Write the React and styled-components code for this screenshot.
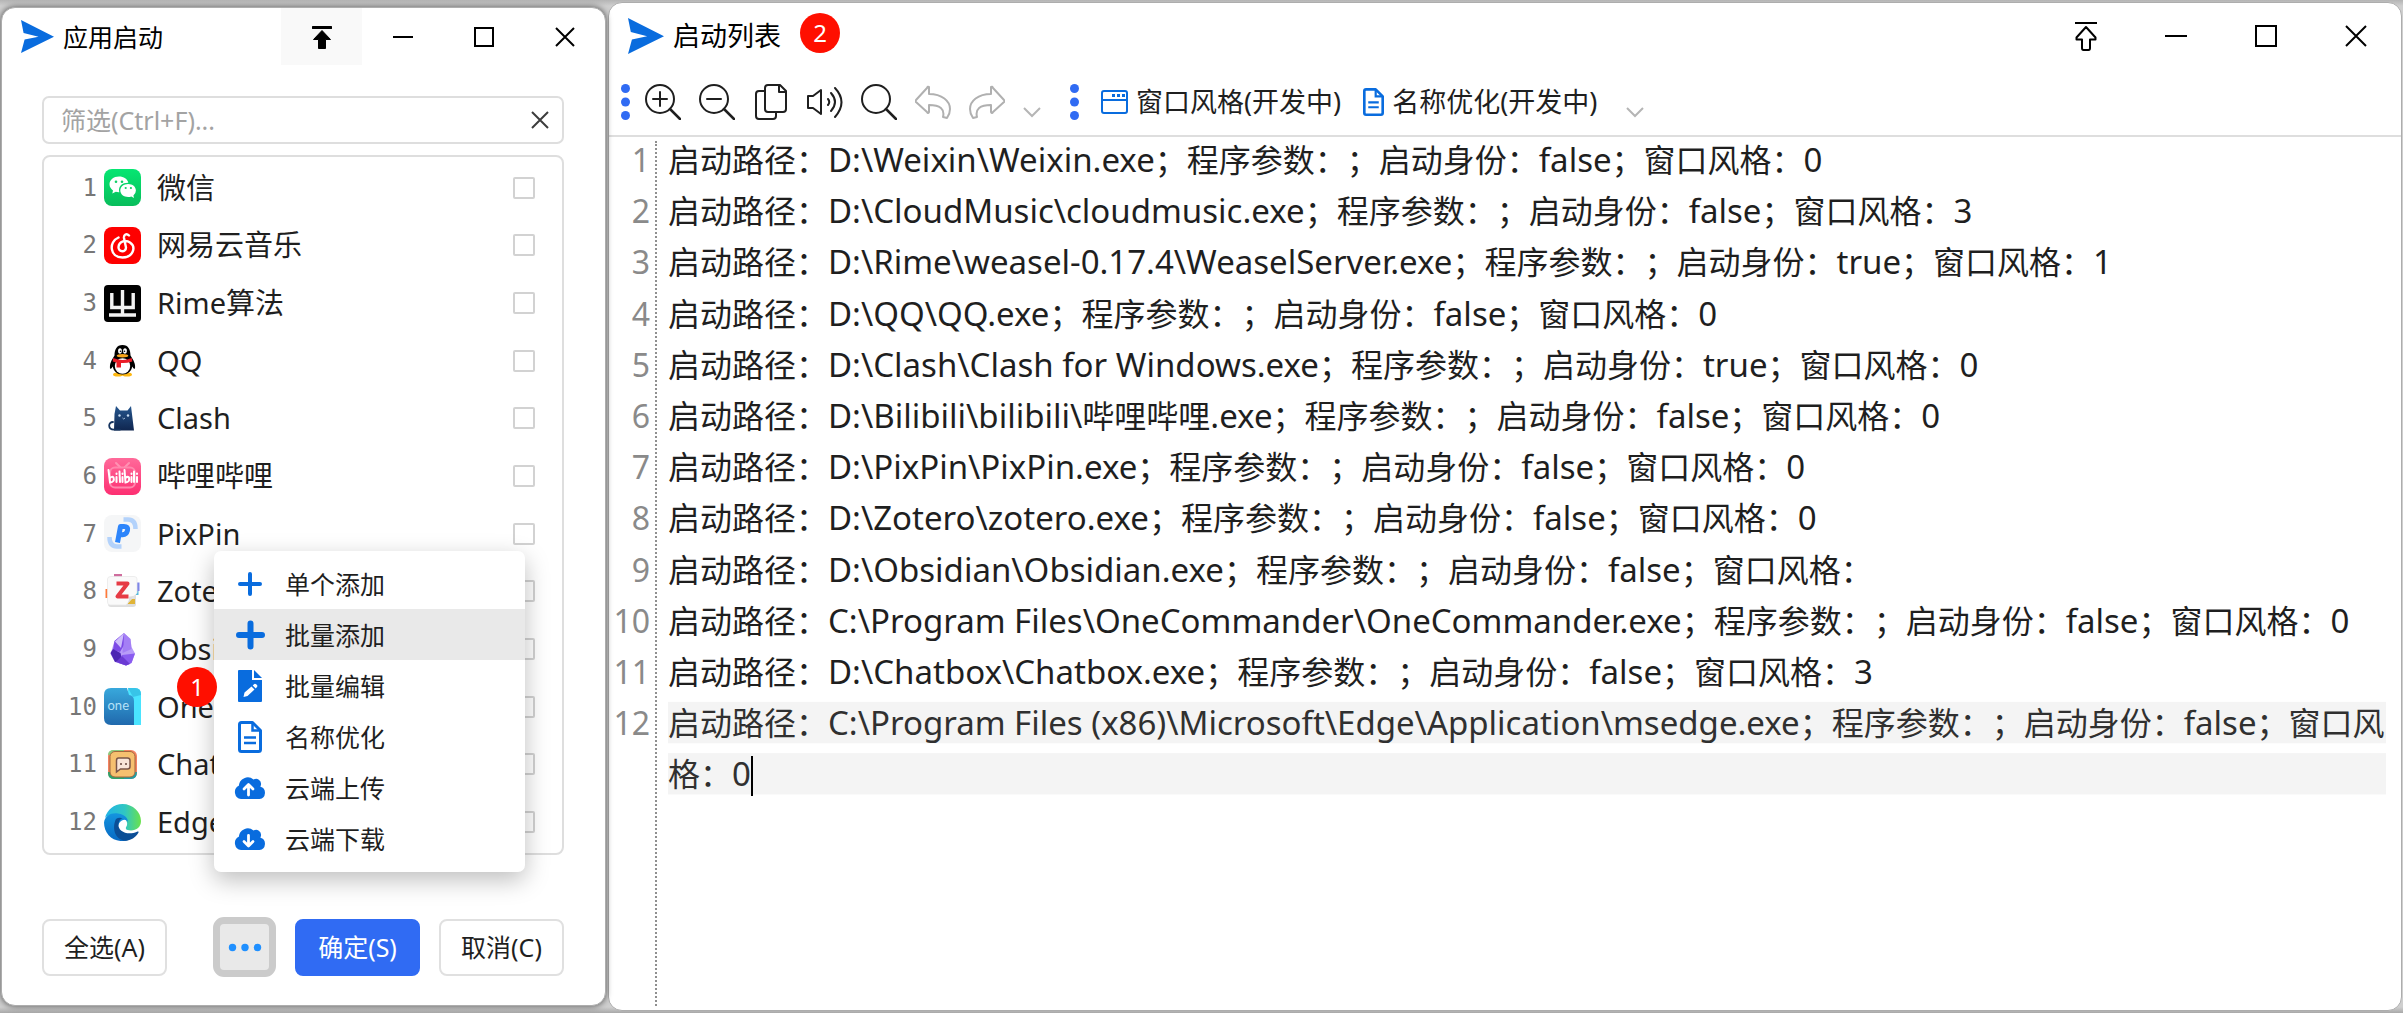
import React from "react";
import styled, { createGlobalStyle, css } from "styled-components";

const sans = `"Noto Sans", "Noto Sans CJK SC", sans-serif`;
const mono = `"DejaVu Sans Mono", monospace`;
const blue = "#096cde";

const GlobalStyle = createGlobalStyle`
  * { box-sizing: border-box; }
  body {
    margin: 0;
    font-family: ${sans};
    color: #1f1f1f;
    background: #cbcbcb;
    text-spacing-trim: space-all;
  }
  button, input { font: inherit; color: inherit; }
`;

const Desktop = styled.main`
  display: grid;
  grid-template-columns: 605px minmax(0, 1fr);
  gap: 2px;
  min-height: 100vh;
  padding: 2px 1px 2px 1px;
  background: linear-gradient(#b4b4b4, #cfcfcf 6px, #cfcfcf calc(100% - 6px), #a8a8a8);
`;

const Window = styled.section`
  display: flex;
  flex-direction: column;
  background: #fff;
  border: 1px solid #adadad;
  border-radius: 14px;
`;

const LauncherWindow = styled(Window)`
  position: relative;
  z-index: 1;
  margin: 5px 0;
  box-shadow: 0 0 6px rgba(0, 0, 0, 0.6);
`;

const EditorWindow = styled(Window)`
  min-width: 0;
`;

const TitleBar = styled.header`
  display: flex;
  align-items: center;
  height: ${(p) => (p.$large ? 65 : 57)}px;
  padding-left: 19px;
`;

const Title = styled.h1`
  flex: ${(p) => (p.$fill ? 1 : "none")};
  margin: 0 0 0 9px;
  font-size: ${(p) => (p.$large ? 27 : 25)}px;
  line-height: 36px;
  font-weight: 400;
  color: #000;
`;

const TitleSpacer = styled.div`
  flex: 1;
`;

const PlainButton = styled.button`
  display: flex;
  align-items: center;
  justify-content: center;
  padding: 0;
  border: 0;
  background: none;
`;

const WindowButton = styled(PlainButton)`
  width: ${(p) => (p.$large ? 90 : 81)}px;
  height: 57px;
  color: #000;
  background: ${(p) => (p.$active ? "#f9f9f9" : "transparent")};
`;

const badgeStyle = css`
  display: flex;
  align-items: center;
  justify-content: center;
  width: 40px;
  height: 40px;
  border-radius: 50%;
  background: #ff0f00;
  color: #fff;
  font-size: 24px;
  line-height: 24px;
`;

const TitleBadge = styled.span`
  ${badgeStyle}
  margin: 0 0 5px 19px;
`;

const MenuBadge = styled.span`
  ${badgeStyle}
  position: absolute;
  left: -37px;
  top: 116px;
`;

const LauncherBody = styled.div`
  display: flex;
  flex: 1;
  flex-direction: column;
  padding: 31px 41px 28px 40px;
`;

const SearchBox = styled.div`
  display: flex;
  align-items: center;
  height: 48px;
  padding: 0 13px 0 17px;
  border: 2px solid #dedede;
  border-radius: 7px;
`;

const SearchInput = styled.input`
  flex: 1;
  min-width: 0;
  padding: 0;
  border: 0;
  outline: 0;
  background: none;
  font-size: 25px;
  line-height: 36px;
  &::placeholder { color: #a3a3a3; opacity: 1; }
`;

const AppList = styled.ul`
  display: grid;
  flex: 1;
  grid-auto-rows: 1fr;
  margin: 11px 0 62px;
  padding: 2px 0 2px;
  border: 2px solid #dedede;
  border-radius: 8px;
  list-style: none;
`;

const AppRow = styled.label`
  display: flex;
  align-items: center;
  height: 100%;
  padding-right: 27px;
`;

const AppNumber = styled.span`
  width: 53px;
  margin-right: 7px;
  text-align: right;
  font: 24px/36px ${mono};
  color: #777;
`;

const AppName = styled.span`
  flex: 1;
  margin-left: 16px;
  font-size: 29px;
  line-height: 40px;
`;

const CheckBox = styled.input`
  appearance: none;
  width: 22px;
  height: 22px;
  margin: 0;
  border: 2px solid #d2d2d2;
  border-radius: 2px;
  background: #fff;
  &:checked { background: #306bf3; }
`;

const Footer = styled.footer`
  display: flex;
  align-items: center;
  height: 60px;
`;

const ActionButton = styled.button`
  width: 125px;
  height: 57px;
  padding: 0;
  border: 2px solid ${(p) => (p.$primary ? "#306bf3" : "#e0e0e0")};
  border-radius: 8px;
  background: ${(p) => (p.$primary ? "#306bf3" : "#fff")};
  color: ${(p) => (p.$primary ? "#fff" : "#1f1f1f")};
  font-size: 25px;
  line-height: 36px;
`;

const MoreAnchor = styled.div`
  position: relative;
  margin-left: auto;
`;

const MoreButton = styled(PlainButton)`
  width: 63px;
  height: 60px;
  border: 7px solid #cbcbcb;
  border-radius: 11px;
  background: #e9e9e9;
`;

const FooterGroup = styled.div`
  display: flex;
  gap: 19px;
  margin-left: 19px;
`;

const Menu = styled.div`
  position: absolute;
  left: 1px;
  bottom: 105px;
  width: 311px;
  padding: 7px 0 8px;
  border-radius: 7px;
  background: #fff;
  box-shadow: 0 8px 24px rgba(0, 0, 0, 0.26);
`;

const MenuItem = styled(PlainButton)`
  justify-content: flex-start;
  gap: 19px;
  width: 100%;
  height: 51px;
  padding-left: 20px;
  background: ${(p) => (p.$active ? "#e9e9e9" : "transparent")};
  font-size: 25px;
  line-height: 36px;
`;

const Toolbar = styled.div`
  display: flex;
  align-items: center;
  height: 69px;
  padding-left: 12px;
  border-bottom: 2px solid #dedede;
`;

const ToolGroup = styled.div`
  display: flex;
  gap: 18px;
  margin: 0 29px 0 15px;
`;

const LabelledTools = styled.div`
  display: flex;
  gap: 22px;
  margin-left: 22px;
`;

const LabelledTool = styled(PlainButton)`
  gap: 8px;
  font-size: 27px;
  line-height: 36px;
`;

const OverflowButton = styled(PlainButton)`
  margin-left: 29px;
`;

const EditorBody = styled.div`
  position: relative;
  flex: 1;
  padding-right: 9px;
`;

const GutterRule = styled.div`
  position: absolute;
  left: 46px;
  top: 4px;
  bottom: 4px;
  border-left: 2px dotted #8f8f8f;
`;

const Lines = styled.ol`
  margin: -3px 0 0;
  padding: 0;
  list-style: none;
  font-size: 32px;
  line-height: 1.6;
`;

const Line = styled.li`
  display: grid;
  grid-template-columns: 41px minmax(0, 1fr);
  column-gap: 18px;
`;

const LineNumber = styled.span`
  text-align: right;
  color: #8a8a8a;
`;

const LineText = styled.span`
  overflow-wrap: anywhere;
  outline: 0;
  ${(p) =>
    p.$current &&
    css`
      color: #303030;
      background: linear-gradient(transparent 5px, #f4f4f4 5px, #f4f4f4 46px, transparent 46px) 0 0 / calc(100% - 6px) 1.6em repeat-y;
    `}
`;

const Latin = styled.span`
  font-size: 33px;
  line-height: 1;
`;

const Caret = styled.span`
  display: inline-block;
  width: 2px;
  height: 40px;
  margin-bottom: -1px;
  vertical-align: text-bottom;
  background: #000;
`;

/* ---------- window chrome icons ---------- */

const Logo = ({ size }) => (
  <svg width={size} height={size} viewBox="0 0 32 32" aria-hidden="true">
    <path fill={blue} d="M0 0 32 16.300 0 32 3.500 19 17 16.300 2.500 12.500Z" />
  </svg>
);

const PinSolid = () => (
  <svg width="20" height="24" viewBox="0 0 20 24" aria-hidden="true">
    <path d="M1 2.500h18" stroke="#000" strokeWidth="3" strokeLinecap="round" />
    <path d="M10 5.500 18.500 14.500H13.500V23.500H6.500V14.500H1.500Z" stroke="#000" strokeWidth="1" strokeLinejoin="round" />
  </svg>
);

const PinOutline = () => (
  <svg width="22" height="30" viewBox="0 0 22 30" fill="none" stroke="#000" strokeWidth="2" strokeLinejoin="round" aria-hidden="true">
    <path d="M0 2h22M11 6 20.500 16.500V18.500H15V27q0 2-1.500 2H8.500Q7 29 7 27V18.500H1.500V16.500Z" />
  </svg>
);

const Minimise = ({ s }) => (
  <svg width={s} height={s} aria-hidden="true"><path d={`M0 ${s / 2}h${s}`} stroke="#000" strokeWidth="2" /></svg>
);
const Maximise = ({ s }) => (
  <svg width={s} height={s} aria-hidden="true"><rect x="1" y="1" width={s - 2} height={s - 2} fill="none" stroke="#000" strokeWidth="2" /></svg>
);
const Close = ({ s, color = "#000" }) => (
  <svg width={s} height={s} aria-hidden="true"><path d={`M1 1 ${s - 1} ${s - 1}M${s - 1} 1 1 ${s - 1}`} stroke={color} strokeWidth="2" /></svg>
);

/* ---------- toolbar icons ---------- */

const Glass = ({ sign }) => (
  <svg width="36" height="36" viewBox="0 0 36 36" fill="none" stroke="#1f1f1f" strokeWidth="2" strokeLinecap="round" aria-hidden="true">
    <circle cx="15" cy="15" r="14" />
    <path d="M25 25 35 35" strokeWidth="2.500" />
    {sign && <path d={sign === "plus" ? "M8 15h14M15 8v14" : "M8 15h14"} />}
  </svg>
);

const CopyIcon = () => (
  <svg width="36" height="36" viewBox="0 0 36 36" fill="none" stroke="#1f1f1f" strokeWidth="2" strokeLinejoin="round" aria-hidden="true">
    <path d="M15 1H27L33 7V25Q33 28 30 28H15Q12 28 12 25V4Q12 1 15 1Z" />
    <path d="M26 1V8H33M11 7H6Q3 7 3 10V32Q3 35 6 35H20Q23 35 23 32V29" />
  </svg>
);

const SoundIcon = () => (
  <svg width="36" height="36" viewBox="0 0 36 36" fill="none" stroke="#1f1f1f" strokeWidth="2" strokeLinejoin="round" strokeLinecap="round" aria-hidden="true">
    <path d="M1 12H6L14 6V30L6 24H1Z" />
    <path d="M21 15Q23.500 18 21 21M24 9Q32 18 24 27M28 4Q41 18 28 33" />
  </svg>
);

const UndoIcon = ({ flip }) => (
  <svg width="36" height="36" viewBox="0 0 36 36" fill="none" stroke="#b0b0b0" strokeWidth="2" strokeLinejoin="round" aria-hidden="true">
    <path transform={flip ? "matrix(-1 0 0 1 36 0)" : undefined} d="M14 3V10C27 10 35 17 35 25Q35 30 32 34L28 33C30 25 25 21 14 21V28Q13 30 12 28L1 18Q0 17 1 16L12 4Q13 2 14 3Z" />
  </svg>
);

const ChevronIcon = () => (
  <svg width="18" height="36" viewBox="0 0 18 36" fill="none" stroke="#b5b5b5" strokeWidth="2" aria-hidden="true">
    <path d="M1 24 9 32 17 24" />
  </svg>
);

const Grip = () => (
  <svg width="9" height="36" viewBox="0 0 9 36" fill="#306bf3" aria-hidden="true">
    <circle cx="4.500" cy="4.500" r="4.500" /><circle cx="4.500" cy="18" r="4.500" /><circle cx="4.500" cy="31.500" r="4.500" />
  </svg>
);

const WindowIcon = () => (
  <svg width="27" height="36" viewBox="0 0 27 36" fill="none" stroke={blue} strokeWidth="2" aria-hidden="true">
    <rect x="1" y="7" width="25" height="22" rx="2" />
    <path d="M1 16h25" />
    <path d="M11 11.500h13" strokeWidth="3" strokeDasharray="3 2" />
  </svg>
);

const DocIcon = ({ w = 21 }) => (
  <svg width={w} height={w * 4 / 3} viewBox="0 0 24 32" fill="none" stroke={blue} strokeWidth="3" aria-hidden="true">
    <path strokeLinejoin="round" d="M3.500 1.500H14.500L22.500 9.500V28.500Q22.500 30.500 20.500 30.500H3.500Q1.500 30.500 1.500 28.500V3.500Q1.500 1.500 3.500 1.500Z" />
    <path d="M14.500 1.500V9.500H22.500M6 16.500H18M6 22H18" strokeWidth="2.500" />
  </svg>
);

/* ---------- menu icons ---------- */

const MenuIconSvg = styled.svg`
  width: 32px;
  height: 32px;
`;

const MenuIconBox = styled.span`
  display: flex;
  justify-content: center;
  width: 32px;
`;

const ThinPlus = () => (
  <MenuIconSvg viewBox="0 0 32 32"><path d="M6 16H26M16 6V26" stroke={blue} strokeWidth="4" strokeLinecap="round" /></MenuIconSvg>
);
const ThickPlus = () => (
  <MenuIconSvg viewBox="0 0 32 32"><path d="M5 16H28M16.500 4.500V27.500" stroke={blue} strokeWidth="6" strokeLinecap="round" /></MenuIconSvg>
);
const FileEdit = () => (
  <MenuIconSvg viewBox="0 0 32 32">
    <path fill={blue} d="M5 0H18V10H28V31Q28 32 27 32H5Q4 32 4 31V1Q4 0 5 0ZM20 0 28 8H20Z" />
    <path fill="#fff" d="M9.500 27 10.500 22.500 17.500 16.500 20.500 19.500 13.500 26ZM18.700 15.500 20 14.200Q21 13.200 22.500 14.500 24 16 23 17L21.700 18.400Z" />
  </MenuIconSvg>
);
const FileLines = () => (
  <MenuIconBox><DocIcon w={24} /></MenuIconBox>
);
const Cloud = ({ down }) => (
  <MenuIconSvg viewBox="0 0 32 32">
    <path fill={blue} d="M7 27A7 7 0 0 1 4.800 13.800 9 9 0 0 1 19.500 7.500 5 5 0 0 1 27 12.500Q26.800 14 26.400 14.700A6.300 6.300 0 0 1 25.500 27Z" />
    <path fill="none" stroke="#fff" strokeWidth="2.800" strokeLinecap="round" strokeLinejoin="round" d={down ? "M14.500 12.500V22.500M10 18.500 14.500 23 19 18.500" : "M14.500 23V13M10 17 14.500 12.500 19 17"} />
  </MenuIconSvg>
);

const Dots = () => (
  <svg width="34" height="9" fill="#2090ff" aria-hidden="true">
    <circle cx="4.500" cy="4.500" r="3.700" /><circle cx="17" cy="4.500" r="3.700" /><circle cx="29.500" cy="4.500" r="3.700" />
  </svg>
);

/* ---------- application icons, 37 x 37 ---------- */

const AppSvg = styled.svg`
  flex: none;
  width: 37px;
  height: 37px;
`;

const WeChat = () => (
  <AppSvg viewBox="0 0 37 37">
    <linearGradient id="wx" x2="0" y2="1"><stop stopColor="#06e672" /><stop offset="1" stopColor="#08bd5b" /></linearGradient>
    <rect width="37" height="37" rx="8" fill="url(#wx)" />
    <path fill="#fff" d="M15 7.500C9.500 7.500 5.500 11 5.500 15.300 5.500 18 7 20 9 21.500L8.300 24.500 11.800 22.800Q13.500 23.300 15.300 23.200C13.800 16.500 19 13.500 24.300 13.700 23.500 10 19.800 7.500 15 7.500Z" />
    <path fill="#fff" d="M24.200 15C19.800 15 16.300 17.800 16.300 21.500S19.800 28 24.200 28Q26 28 27.300 27.500L30 29 29.400 26.400Q31.900 24.500 31.900 21.500C31.900 17.800 28.600 15 24.200 15Z" />
    <g fill="#10cf66"><circle cx="12" cy="12.800" r="1.300" /><circle cx="18" cy="12.800" r="1.300" /><circle cx="21.700" cy="19" r="1.100" /><circle cx="26.900" cy="19" r="1.100" /></g>
  </AppSvg>
);
const NetEase = () => (
  <AppSvg viewBox="0 0 37 37">
    <rect width="37" height="37" rx="8" fill="#fe0000" />
    <path fill="none" stroke="#fff" strokeWidth="2.400" strokeLinecap="round" d="M14.500 10.500C4 15 6 30.500 18.500 30.500 29 30.500 32.500 20 26 15.500 22 12.500 15 14 14.500 20 14.300 25.500 22 25.500 22 20.500L20 11C19.600 7.500 22.500 6 25 8.500" />
  </AppSvg>
);
const Rime = () => (
  <AppSvg viewBox="0 0 37 37">
    <rect width="37" height="37" rx="4" fill="#000" />
    <path fill="none" stroke="#f3f3f3" strokeWidth="3.400" d="M7.800 8V22.500H29.200V8M18.500 5V30M5 30H32" />
  </AppSvg>
);
const QQ = () => (
  <AppSvg viewBox="0 0 37 37">
    <ellipse cx="14" cy="32.500" rx="5" ry="2" fill="#fdb813" /><ellipse cx="23" cy="32.500" rx="5" ry="2" fill="#fdb813" />
    <path d="M18.500 3C12.500 3 10.500 8 10.500 13.500 7 19 5.500 22 6 26.500 7 27.500 8 26 8.800 24.500 9.500 29 13 32.500 18.500 32.500S27.500 29 28.200 24.500C29 26 30 27.500 31 26.500 31.500 22 30 19 26.500 13.500 26.500 8 24.500 3 18.500 3Z" />
    <ellipse cx="18.500" cy="24" rx="7.700" ry="7.800" fill="#fff" />
    <ellipse cx="16" cy="9" rx="1.900" ry="2.800" fill="#fff" /><ellipse cx="21" cy="9" rx="1.900" ry="2.800" fill="#fff" />
    <circle cx="16.500" cy="9.300" r=".8" /><circle cx="20.500" cy="9.300" r=".8" />
    <ellipse cx="18.500" cy="13.800" rx="5.800" ry="1.700" fill="#f9a61a" />
    <path fill="#ea1c27" d="M9.200 16Q18.500 20 27.800 16L28.300 19.500Q22 21.500 17 21V25.500H12.500V20.500L8.700 19.500Z" />
  </AppSvg>
);
const Clash = () => (
  <AppSvg viewBox="0 0 37 37">
    <linearGradient id="cl" x2="0" y2="1"><stop stopColor="#25568e" /><stop offset="1" stopColor="#10264f" /></linearGradient>
    <path fill="url(#cl)" d="M12 6 16 10.500H23.500L27 6 30 30.500H10L10.500 14Z" />
    <path fill="none" stroke="#16345f" strokeWidth="1.800" strokeLinecap="round" d="M9 22C4 22 3.500 29.500 10 29.600H16" />
    <circle cx="15.500" cy="15.500" r="1.200" fill="#c7dcf2" /><circle cx="24" cy="15.500" r="1.200" fill="#c7dcf2" />
    <path d="M18.500 18 19.700 19 21 18" fill="none" stroke="#c7dcf2" strokeWidth=".8" />
  </AppSvg>
);
const Bilibili = () => (
  <AppSvg viewBox="0 0 37 37">
    <linearGradient id="bl" x2="0" y2="1"><stop stopColor="#ff6a9a" /><stop offset="1" stopColor="#fd2f72" /></linearGradient>
    <rect width="37" height="37" rx="8" fill="url(#bl)" />
    <path d="M12 5 16 9M25 5 21 9" stroke="#ff92b3" strokeWidth="2" strokeLinecap="round" />
    <rect x="6" y="9.500" width="25" height="20" rx="5" fill="none" stroke="#ff87ad" strokeWidth="2" />
    <g stroke="#fff" strokeWidth="2" strokeLinecap="round" fill="none">
      <path d="M4.500 12 6 24.500Q11 24 9.500 19.500 8 18 6 20M12.500 19V24M15.500 13.500 16 24M18.500 19V24M20.500 12 21.500 24.500Q26 24 25 19.500 23.500 18 21.500 20M27.500 19V24M30 13.500V24M33 19V24" />
      <path d="M12.500 15.500V16M18.500 15.500V16M27.500 15.500V16M33 15.500V16" />
    </g>
  </AppSvg>
);
const PixPin = () => (
  <AppSvg viewBox="0 0 37 37">
    <rect width="37" height="37" rx="8" fill="#f5f6f7" />
    <path fill="none" stroke="#b3d2fb" strokeWidth="4.500" d="M19.500 4.500H24Q31.500 4.500 31.500 14M17.500 31.500H13Q5.500 31.500 5.500 22" />
    <path fill="none" stroke="#2d85fb" strokeWidth="5" strokeLinejoin="round" d="M13.500 27.500 16.500 11.500H20Q24.500 11.500 23.500 15.500T18.500 19.800H16" />
  </AppSvg>
);
const Zotero = () => (
  <AppSvg viewBox="0 0 37 37">
    <path fill="#cf6d9e" d="M10 1H18V6H10Z" /><path fill="#ff7a3b" d="M1.500 16H6V25H1.500Z" />
    <path fill="#7f86e8" d="M31 9.500H35.500V18H31Z" /><path fill="#56b9dd" d="M31 18H34.500V22H31Z" />
    <path fill="#dedede" d="M5 10H32V31Q32 34 29 34H7Q4 34 4 31Z" />
    <path fill="#e0b437" d="M24 26H31V31H24Z" />
    <path fill="#fafafa" stroke="#e6e6e6" strokeWidth=".7" d="M7 3.500H30Q33 3.500 33 6V20L22 32H6Q3.500 32 3.500 29V6Q3.500 3.500 7 3.500Z" />
    <path fill="#dcdcdc" d="M33 20Q30 24 25 23.500 25.500 29 22 32Z" />
    <path fill="none" stroke="#e63b45" strokeWidth="4" strokeLinejoin="round" d="M12.500 10.500H23.500L13.500 23.500H24.500" />
  </AppSvg>
);
const Obsidian = () => (
  <AppSvg viewBox="0 0 37 37">
    <path fill="#b89cf8" d="M20 2 26.500 8 27.500 16 31 22.500 27.500 32 22 34.500 11 31 6.500 23 10.500 10Z" />
    <path fill="#7c4ae6" d="M20 2 10.500 10 9 19 16 21 20 14Z" />
    <path fill="#cdbcfb" d="M11 10.500 20 2 17 17Z" />
    <path fill="#4c25b3" d="M6.500 22 9 18 16.500 22 18.500 30 11 31Z" />
    <path fill="#8a5cf0" d="M18 24 31 22.500 27.500 32 22 34.500 15 32Z" />
    <path fill="#6b3ad3" d="M12 31 18 25 26 33 22 34.500Z" />
    <path fill="#9b74f4" d="M20 2 26.500 8 27.500 18 18.500 22Z" opacity=".7" />
  </AppSvg>
);
const OneCommander = () => (
  <AppSvg viewBox="0 0 37 37">
    <linearGradient id="oc" x2="0" y2="1"><stop stopColor="#38a8dc" /><stop offset="1" stopColor="#2069ad" /></linearGradient>
    <path fill="#4ae4ff" d="M24 0H31Q37 0 37 6V37H24Z" />
    <path fill="#38c4e8" d="M24 0H31Q37 0 37 7L29 9Z" />
    <path fill="url(#oc)" d="M7 0H23L25 7Q30 7.500 30 13V37H7Q0 37 0 30V7Q0 0 7 0Z" />
    <text x="3.500" y="22" fill="#b5e2f7" fontSize="13" fontFamily={`Lato, ${sans}`}>one</text>
  </AppSvg>
);
const Chatbox = () => (
  <AppSvg viewBox="0 0 37 37">
    <rect x="4" y="4" width="29" height="29" rx="6" fill="#f38362" />
    <path fill="#8ccb80" d="M10 4H20V9H4Q4 4 10 4Z" />
    <path fill="#2ba46d" d="M4 26H20V33H10Q4 33 4 27Z" /><path fill="#1f9da3" d="M20 26H33Q33 33 27 33H20Z" />
    <rect x="6" y="5.500" width="25" height="25.500" rx="5" fill="#f6c06f" stroke="#a2663d" strokeWidth="1" />
    <path fill="#f9e5d8" stroke="#7b5548" strokeWidth="1.500" d="M14.500 12H23.500Q26 12 26 14.500V20.500Q26 23 23.500 23H16.500L12.500 26V14.500Q12.500 12 14.500 12Z" />
    <g fill="#65453d"><circle cx="17" cy="18" r="1" /><circle cx="22" cy="18" r="1" /></g>
  </AppSvg>
);
const Edge = () => (
  <AppSvg viewBox="0 0 37 37">
    <linearGradient id="e1"><stop stopColor="#21b3e8" /><stop offset=".55" stopColor="#30c6c3" /><stop offset="1" stopColor="#6ae24c" /></linearGradient>
    <linearGradient id="e2" x2="0" y2="1"><stop stopColor="#1494df" /><stop offset="1" stopColor="#0869c3" /></linearGradient>
    <path fill="url(#e1)" d="M1 14C3 6 10 0 18.500 0 29 0 37 8 37 17 37 23 32.500 26.500 27 26.500 21.500 26.500 21.300 24.300 22.300 22.800 25 19 21.500 13 14.500 11.500 8 10 3 11.500 1 14Z" />
    <path fill="url(#e2)" d="M0 18.500C1 11.500 7.500 8.500 14 9.500 21 10.500 24 14.500 24 18 20 12 12.500 19 14 26 15.300 31.500 19.500 35.500 24 36.200 11 40 0 31 0 18.500Z" />
    <path fill="#0b4e96" d="M12 15C8 23 10 35.500 21.500 36.800 27 36.500 31.500 33.500 34.400 28.800 35 27.500 34 27 33 27.700 24 32 13.500 27.500 14.500 20Q15 15.500 18.500 14.300 15 13 12 15Z" />
  </AppSvg>
);

const apps = [
  ["微信", WeChat], ["网易云音乐", NetEase], ["Rime算法", Rime], ["QQ", QQ], ["Clash", Clash],
  ["哔哩哔哩", Bilibili], ["PixPin", PixPin], ["Zotero", Zotero], ["Obsidian", Obsidian],
  ["OneCommander", OneCommander], ["Chatbox", Chatbox], ["Edge", Edge],
];

const menu = [
  ["单个添加", ThinPlus], ["批量添加", ThickPlus], ["批量编辑", FileEdit],
  ["名称优化", FileLines], ["云端上传", Cloud], ["云端下载", () => <Cloud down />],
];

const entries = [
  ["D:\\Weixin\\Weixin.exe", "false", "0"],
  ["D:\\CloudMusic\\cloudmusic.exe", "false", "3"],
  ["D:\\Rime\\weasel-0.17.4\\WeaselServer.exe", "true", "1"],
  ["D:\\QQ\\QQ.exe", "false", "0"],
  ["D:\\Clash\\Clash for Windows.exe", "true", "0"],
  ["D:\\Bilibili\\bilibili\\哔哩哔哩.exe", "false", "0"],
  ["D:\\PixPin\\PixPin.exe", "false", "0"],
  ["D:\\Zotero\\zotero.exe", "false", "0"],
  ["D:\\Obsidian\\Obsidian.exe", "false", ""],
  ["C:\\Program Files\\OneCommander\\OneCommander.exe", "false", "0"],
  ["D:\\Chatbox\\Chatbox.exe", "false", "3"],
  ["C:\\Program Files (x86)\\Microsoft\\Edge\\Application\\msedge.exe", "false", "0"],
];

/* Latin runs are set one pixel larger than the Chinese text around them. */
const mixedText = (text) =>
  text.split(/([\x20-\x7e]+)/).map((run, i) => (i % 2 ? <Latin key={i}>{run}</Latin> : run));

function Launcher() {
  return (
    <LauncherWindow>
      <TitleBar>
        <Logo size={33} />
        <Title $fill>应用启动</Title>
        <WindowButton $active aria-label="置顶"><PinSolid /></WindowButton>
        <WindowButton aria-label="最小化"><Minimise s={20} /></WindowButton>
        <WindowButton aria-label="最大化"><Maximise s={20} /></WindowButton>
        <WindowButton aria-label="关闭"><Close s={20} /></WindowButton>
      </TitleBar>
      <LauncherBody>
        <SearchBox>
          <SearchInput placeholder="筛选(Ctrl+F)..." aria-label="筛选" />
          <PlainButton aria-label="清除"><Close s={18} color="#3c3c3c" /></PlainButton>
        </SearchBox>
        <AppList>
          {apps.map(([name, Icon], i) => (
            <li key={name}>
              <AppRow>
                <AppNumber>{i + 1}</AppNumber>
                <Icon />
                <AppName>{name}</AppName>
                <CheckBox type="checkbox" />
              </AppRow>
            </li>
          ))}
        </AppList>
        <Footer>
          <ActionButton>全选(A)</ActionButton>
          <MoreAnchor>
            <MoreButton aria-label="更多"><Dots /></MoreButton>
            <Menu role="menu">
              {menu.map(([label, Icon], i) => (
                <MenuItem key={label} role="menuitem" $active={i === 1}>
                  <Icon />
                  {label}
                </MenuItem>
              ))}
              <MenuBadge>1</MenuBadge>
            </Menu>
          </MoreAnchor>
          <FooterGroup>
            <ActionButton $primary>确定(S)</ActionButton>
            <ActionButton>取消(C)</ActionButton>
          </FooterGroup>
        </Footer>
      </LauncherBody>
    </LauncherWindow>
  );
}

function Editor() {
  return (
    <EditorWindow>
      <TitleBar $large>
        <Logo size={36} />
        <Title $large>启动列表</Title>
        <TitleBadge>2</TitleBadge>
        <TitleSpacer />
        <WindowButton $large aria-label="置顶"><PinOutline /></WindowButton>
        <WindowButton $large aria-label="最小化"><Minimise s={22} /></WindowButton>
        <WindowButton $large aria-label="最大化"><Maximise s={22} /></WindowButton>
        <WindowButton $large aria-label="关闭"><Close s={22} /></WindowButton>
      </TitleBar>
      <Toolbar>
        <Grip />
        <ToolGroup>
          <PlainButton aria-label="放大"><Glass sign="plus" /></PlainButton>
          <PlainButton aria-label="缩小"><Glass sign="minus" /></PlainButton>
          <PlainButton aria-label="复制"><CopyIcon /></PlainButton>
          <PlainButton aria-label="朗读"><SoundIcon /></PlainButton>
          <PlainButton aria-label="查找"><Glass /></PlainButton>
          <PlainButton aria-label="撤销"><UndoIcon /></PlainButton>
          <PlainButton aria-label="重做"><UndoIcon flip /></PlainButton>
          <PlainButton aria-label="更多工具"><ChevronIcon /></PlainButton>
        </ToolGroup>
        <Grip />
        <LabelledTools>
          <LabelledTool><WindowIcon />窗口风格(开发中)</LabelledTool>
          <LabelledTool><DocIcon />名称优化(开发中)</LabelledTool>
        </LabelledTools>
        <OverflowButton aria-label="更多选项"><ChevronIcon /></OverflowButton>
      </Toolbar>
      <EditorBody>
        <GutterRule />
        <Lines>
          {entries.map(([path, elevated, style], i) => {
            const current = i === entries.length - 1;
            return (
              <Line key={path}>
                <LineNumber>{i + 1}</LineNumber>
                <LineText $current={current}>
                  {mixedText(`启动路径：${path}；程序参数：；启动身份：${elevated}；窗口风格：${style}`)}
                  {current && <Caret />}
                </LineText>
              </Line>
            );
          })}
        </Lines>
      </EditorBody>
    </EditorWindow>
  );
}

export default function App() {
  return (
    <>
      <GlobalStyle />
      <Desktop>
        <Launcher />
        <Editor />
      </Desktop>
    </>
  );
}
